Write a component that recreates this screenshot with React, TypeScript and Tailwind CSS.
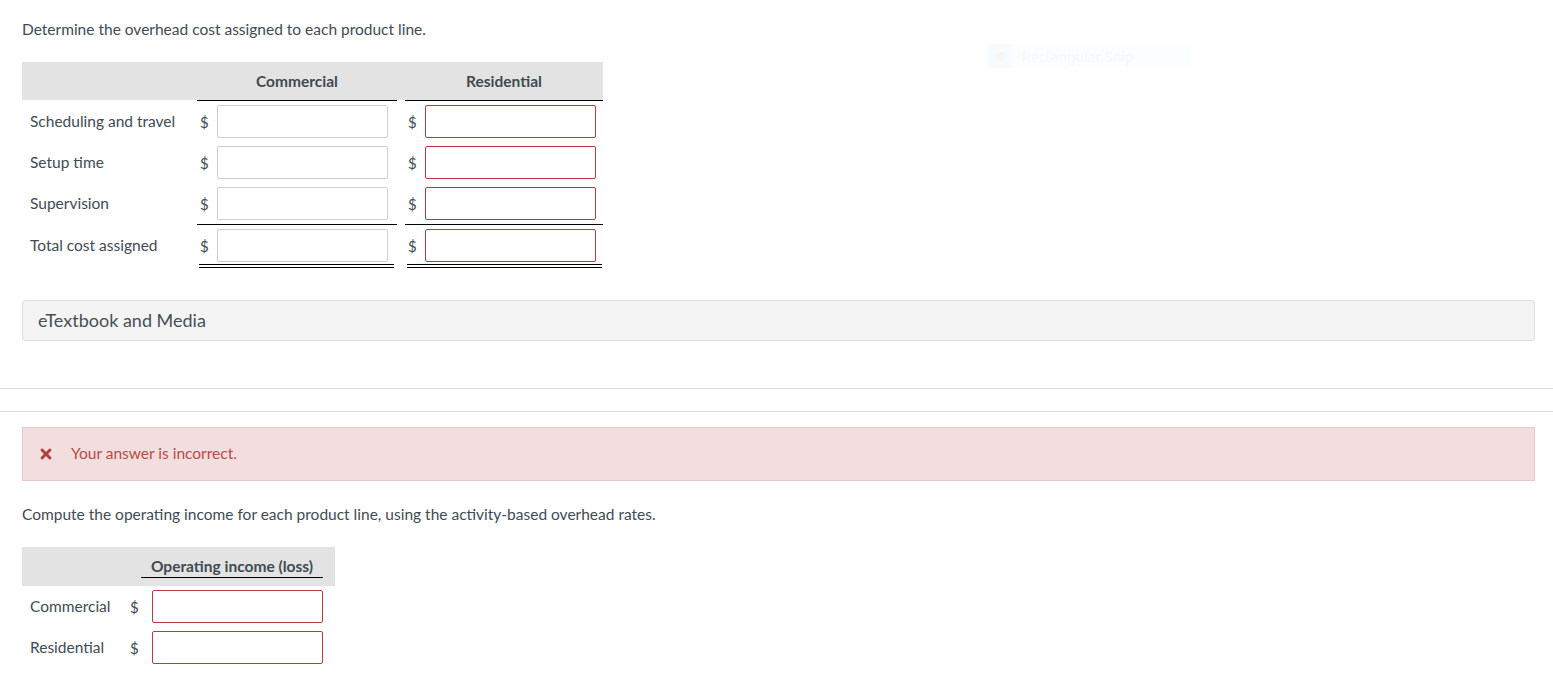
import { FaTimes } from "react-icons/fa";

function MoneyCell({ width, inputWidth, tone, double }: { width: string; inputWidth: string; tone: string; double?: boolean }) {
  return (
    <div className={`${width} flex flex-col`}>
      <div className="flex items-center">
        <span className="w-[20px] pl-[3px] text-[15px] leading-[20px] text-[#414b54]">$</span>
        <div className={`${inputWidth} h-[33px] rounded-[2px] border bg-white ${tone}`} />
      </div>
      {double && <div className="mt-[2px] ml-[2px] h-[4px] w-[195px] border-y border-black" />}
    </div>
  );
}

const grey = "border-[#cfcfcf]";
const red = "border-[#b83c3c]";

export default function App() {
  return (
    <div className="relative h-[700px] overflow-hidden bg-white font-['Lato',sans-serif] text-[#414b54]">
      <div className="absolute left-[988px] top-[44px] flex h-[24px] w-[202px] items-center bg-[#fcfdff]" aria-hidden>
        <div className="flex h-[24px] w-[24px] items-center justify-center bg-[#f7fbff]">
          <div className="h-[9px] w-[9px] rounded-full bg-[#f9f5f3]" />
        </div>
        <span className="ml-[10px] font-['Noto_Sans',sans-serif] text-[14px] text-[#f7f8f9]">Rectangular Snip</span>
      </div>

      <div className="px-[22px] pt-[19px] text-[15.5px] leading-[21px]">
        Determine the overhead cost assigned to each product line.
      </div>

      <div className="ml-[22px] mt-[22px] w-[581px]">
        <div className="flex h-[38px] bg-[#e3e3e3] text-[15.5px] font-bold leading-[38px]">
          <div className="w-[175px]" />
          <div className="w-[200px] text-center">Commercial</div>
          <div className="ml-[8px] w-[198px] text-center">Residential</div>
        </div>
        <div className="flex">
          <div className="ml-[175px] h-px w-[200px] bg-black" />
          <div className="ml-[8px] h-px w-[198px] bg-black" />
        </div>

        <div className="mt-[4px] flex h-[41px] items-start text-[15.5px]">
          <div className="w-[175px] pl-[8px] leading-[33px]">Scheduling and travel</div>
          <MoneyCell width="w-[208px]" inputWidth="w-[171px]" tone={grey} />
          <MoneyCell width="w-[198px]" inputWidth="w-[171px]" tone={red} />
        </div>
        <div className="flex h-[41px] items-start text-[15.5px]">
          <div className="w-[175px] pl-[8px] leading-[33px]">Setup time</div>
          <MoneyCell width="w-[208px]" inputWidth="w-[171px]" tone={grey} />
          <MoneyCell width="w-[198px]" inputWidth="w-[171px]" tone={red} />
        </div>
        <div className="flex h-[37px] items-start text-[15.5px]">
          <div className="w-[175px] pl-[8px] leading-[33px]">Supervision</div>
          <MoneyCell width="w-[208px]" inputWidth="w-[171px]" tone={grey} />
          <MoneyCell width="w-[198px]" inputWidth="w-[171px]" tone={red} />
        </div>
        <div className="flex">
          <div className="ml-[175px] h-px w-[200px] bg-black" />
          <div className="ml-[8px] h-px w-[198px] bg-black" />
        </div>
        <div className="mt-[4px] flex items-start text-[15.5px]">
          <div className="w-[175px] pl-[8px] leading-[33px]">Total cost assigned</div>
          <MoneyCell width="w-[208px]" inputWidth="w-[171px]" tone={grey} double />
          <MoneyCell width="w-[198px]" inputWidth="w-[171px]" tone={red} double />
        </div>
      </div>

      <div className="mx-[18px] ml-[22px] mt-[32px] flex h-[41px] items-center rounded-[3px] border border-[#dedede] bg-[#f4f4f4] pl-[15px] text-[18px] text-[#484f55]">
        eTextbook and Media
      </div>

      <div className="mt-[47px] h-px bg-[#dcdcdc]" />
      <div className="mt-[22px] h-px bg-[#dcdcdc]" />

      <div className="ml-[22px] mr-[18px] mt-[15px] flex h-[54px] items-center border border-[#e8c8cc] bg-[#f2dede] pl-[15px] text-[15.5px] text-[#b94a48]">
        <FaTimes className="h-[16px] w-[16px] text-[#b23f3f]" />
        <span className="ml-[17px]">Your answer is incorrect.</span>
      </div>

      <div className="ml-[22px] mt-[23px] text-[15.5px] leading-[21px]">
        Compute the operating income for each product line, using the activity-based overhead rates.
      </div>

      <div className="ml-[22px] mt-[22px] w-[313px]">
        <div className="flex h-[39px] bg-[#e3e3e3] text-[15.5px] font-bold">
          <div className="ml-[119px] mt-[9px] h-[22px] w-[182px] border-b border-black text-center leading-[20px]">
            Operating income (loss)
          </div>
        </div>
        <div className="mt-[4px] flex h-[41px] items-start text-[15.5px]">
          <div className="w-[105px] pl-[8px] leading-[33px]">Commercial</div>
          <div className="flex items-center">
            <span className="w-[25px] pl-[3px] text-[15px] leading-[20px]">$</span>
            <div className={`h-[33px] w-[171px] rounded-[2px] border bg-white ${red}`} />
          </div>
        </div>
        <div className="flex h-[41px] items-start text-[15.5px]">
          <div className="w-[105px] pl-[8px] leading-[33px]">Residential</div>
          <div className="flex items-center">
            <span className="w-[25px] pl-[3px] text-[15px] leading-[20px]">$</span>
            <div className={`h-[33px] w-[171px] rounded-[2px] border bg-white ${red}`} />
          </div>
        </div>
      </div>

      <div className="ml-[22px] mr-[18px] mt-[-1px] h-px bg-[#dcdcdc] pt-0" style={{ marginTop: 34 }} />
    </div>
  );
}
